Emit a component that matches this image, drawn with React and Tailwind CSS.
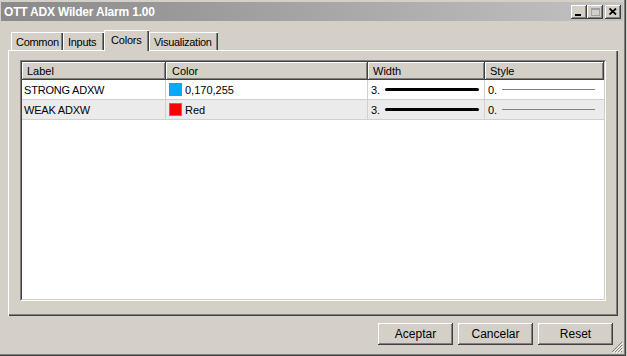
import React from "react";

const raised = "shadow-[inset_-1px_-1px_#404040,inset_1px_1px_#ffffff,inset_-2px_-2px_#808080]";

function TitleButton({ children }) {
  return (
    <div className={`w-[16px] h-[14px] bg-[#d4d0c8] flex items-center justify-center ${raised}`}>
      {children}
    </div>
  );
}

function Tab({ label, active, w }) {
  if (active) {
    return (
      <div className={`${w} h-[21px] -mb-px pl-[6px] pt-[2px] bg-[#d4d0c8] border-t border-l border-white shadow-[inset_-1px_0_#404040,inset_-2px_0_#808080] relative z-10 tracking-[-0.2px]`}>
        {label}
      </div>
    );
  }
  return (
    <div className={`${w} h-[18px] pl-[4px] pt-[2px] border-t border-l border-white shadow-[inset_-1px_0_#404040,inset_-2px_0_#808080] tracking-[-0.3px]`}>
      {label}
    </div>
  );
}

const rows = [
  { label: "STRONG ADXW", color: "#00aaff", colorText: "0,170,255", bg: "bg-white" },
  { label: "WEAK ADXW", color: "#ff0000", colorText: "Red", bg: "bg-[#ebebeb]" },
];

function App() {
  return (
    <div className="w-[627px] h-[356px] bg-[#d4d0c8] text-[11px] leading-[14px] text-black font-['Liberation_Sans','Arial',sans-serif]">
      <div className="relative w-[626px] h-[356px] flex flex-col border-r border-b border-[#404040]">
        <div className="flex-1 flex flex-col border-r border-b border-[#808080]">
          {/* title bar */}
          <div className="mt-[2px] mx-[1px] h-[19px] flex items-center justify-between pl-[3px] pr-[2px] bg-gradient-to-r from-[#8a8a8a] to-[#c2c2c2]">
            <span className="text-white font-bold text-[12px] tracking-[-0.2px]">OTT ADX Wilder Alarm 1.00</span>
            <div className="flex items-center">
              <TitleButton>
                <div className="w-[6px] h-[2px] bg-black mt-[6px] -ml-[2px]" />
              </TitleButton>
              <TitleButton>
                <div className="w-[9px] h-[8px] border border-[#a0a0a0] border-t-2" />
              </TitleButton>
              <div className="w-[2px]" />
              <TitleButton>
                <svg width="8" height="7" viewBox="0 0 8 7">
                  <path d="M0.5 0.5 L7 6.5 M7 0.5 L0.5 6.5" stroke="#000" strokeWidth="1.8" />
                </svg>
              </TitleButton>
            </div>
          </div>

          {/* tabs */}
          <div className="mt-[9px] ml-[11px] h-[20px] flex items-end">
            <Tab label="Common" w="w-[52px]" />
            <Tab label="Inputs" w="w-[41px]" />
            <Tab label="Colors" w="w-[45px]" active />
            <Tab label="Visualization" w="w-[69px]" />
          </div>

          {/* panel */}
          <div className="ml-[8px] w-[610px] h-[266px] border-t border-l border-white shadow-[inset_-1px_-1px_#404040,inset_-2px_-2px_#808080] pt-[9px] pl-[11px]">
            <div className="w-[586px] h-[241px] border-t border-l border-[#808080] border-r border-b border-r-white border-b-white">
              <div className="w-full h-full border-t border-l border-[#404040] border-r border-b border-r-[#d4d0c8] border-b-[#d4d0c8] bg-white">
                {/* header */}
                <div className="flex h-[18px] bg-[#d4d0c8]">
                  <div className={`w-[144px] pl-[5px] pt-[2px] ${raised}`}>Label</div>
                  <div className={`w-[202px] pl-[6px] pt-[2px] ${raised}`}>Color</div>
                  <div className={`w-[117px] pl-[5px] pt-[2px] ${raised}`}>Width</div>
                  <div className={`flex-1 pl-[5px] pt-[2px] ${raised}`}>Style</div>
                </div>
                {rows.map((r) => (
                  <div key={r.label} className={`flex h-[20px] border-b border-[#d0d0d0] ${r.bg}`}>
                    <div className="w-[144px] pl-[2px] flex items-center border-r border-[#d0d0d0] tracking-[-0.2px]">{r.label}</div>
                    <div className="w-[202px] pl-[3px] flex items-center gap-[3px] border-r border-[#d0d0d0]">
                      <div className="w-[13px] h-[13px] border border-[#808080]" style={{ backgroundColor: r.color }} />
                      <span>{r.colorText}</span>
                    </div>
                    <div className="w-[117px] pl-[3px] flex items-center border-r border-[#d0d0d0]">
                      <span className="w-[14px]">3.</span>
                      <div className="w-[94px] h-[3px] bg-black rounded-full" />
                    </div>
                    <div className="flex-1 pl-[3px] flex items-center">
                      <span className="w-[14px]">0.</span>
                      <div className="w-[93px] h-px bg-[#808080]" />
                    </div>
                  </div>
                ))}
              </div>
            </div>
          </div>

          {/* buttons */}
          <div className="mt-[7px] flex justify-end gap-[5px] pr-[11px]">
            {["Aceptar", "Cancelar", "Reset"].map((b) => (
              <div
                key={b}
                className={`w-[75px] h-[22px] flex items-center justify-center text-[12px] bg-[#d4d0c8] ${raised}`}
              >
                {b}
              </div>
            ))}
          </div>
        </div>

        {/* resize grip */}
        <svg className="absolute right-[2px] bottom-[2px]" width="12" height="12" viewBox="0 0 12 12">
          <path d="M11 1 L1 11 M11 4 L4 11 M11 7 L7 11 M11 10 L10 11" stroke="#808080" strokeWidth="1" />
          <path d="M12 2 L2 12 M12 5 L5 12 M12 8 L8 12" stroke="#ffffff" strokeWidth="1" />
        </svg>
      </div>
    </div>
  );
}

export default App;
